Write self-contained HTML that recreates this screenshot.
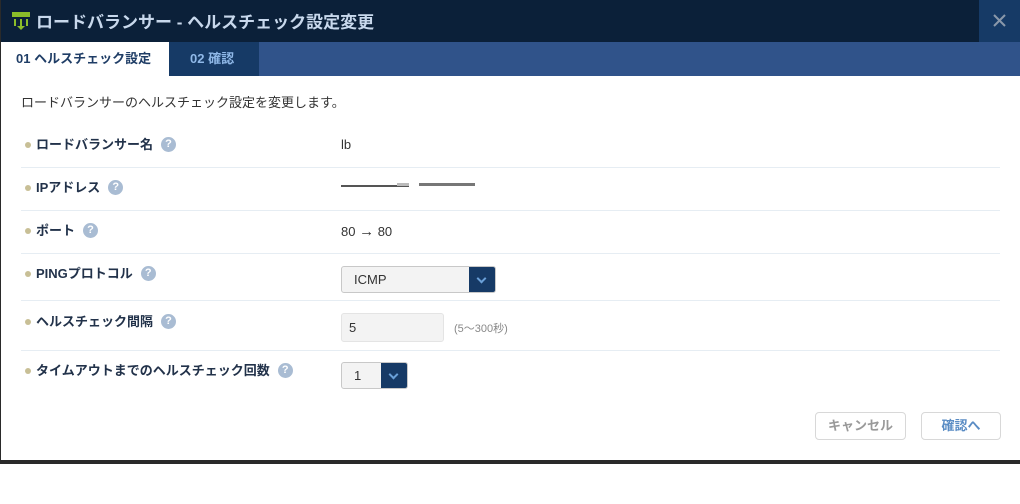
<!DOCTYPE html>
<html><head><meta charset="utf-8"><style>
*{margin:0;padding:0;box-sizing:border-box}
body{width:1020px;height:504px;background:#fff;font-family:"Liberation Sans","Noto Sans CJK JP",sans-serif;position:relative;overflow:hidden;color:#333}
.hdr{position:absolute;left:0;top:0;width:1020px;height:42px;background:#0b2039}
.hdr .t{position:absolute;left:36px;top:8px;font-size:17px;font-weight:bold;color:#c8d8ec}
.close{position:absolute;left:979px;top:0;width:41px;height:42px;background:#163a66}
.tabs{position:absolute;left:0;top:42px;width:1020px;height:34px;background:#30538a}
.tab1{position:absolute;left:0;top:0;width:169px;height:34px;background:#fff;color:#1f3d66;font-weight:bold;font-size:13px;line-height:34px;padding-left:16px}
.tab2{position:absolute;left:169px;top:0;width:90px;height:34px;background:#163a66;color:#8fb8e8;font-weight:bold;font-size:13px;line-height:34px;padding-left:21px}
.desc{position:absolute;left:21px;top:92px;font-size:13px;color:#333}
.row{position:absolute;left:21px;width:979px;border-bottom:1px solid #e6edf3}
.lbl{position:absolute;left:15px;font-size:13px;font-weight:bold;color:#22324a;line-height:16px}
.lbl:before{content:"";position:absolute;left:-11px;top:5px;width:6px;height:6px;border-radius:50%;background:#c8bf96}
.q{display:inline-block;width:15px;height:15px;border-radius:50%;background:#a9bcd3;color:#fff;font-size:11px;text-align:center;line-height:15px;margin-left:8px;vertical-align:top}
.val{position:absolute;left:320px;font-size:13px;color:#333}
.sel{position:absolute;left:341px;height:27px;border:1px solid #c8c8c8;border-radius:3px;background:#f3f3f3;font-size:13px;line-height:25px;padding-left:12px;overflow:hidden}
.sel .ar{position:absolute;right:0;top:0;width:26px;height:27px;background:#163a66}
.sel .ar:after{content:"";position:absolute;left:9px;top:8px;width:5px;height:5px;border-right:2px solid #6aa0d8;border-bottom:2px solid #6aa0d8;transform:rotate(45deg)}
.inp{position:absolute;left:341px;top:313px;width:103px;height:29px;border:1px solid #e4e4e4;border-radius:3px;background:#f3f3f3;font-size:13px;line-height:27px;padding-left:7px}
.btn{position:absolute;top:412px;height:28px;border:1px solid #d8d8d8;border-radius:4px;background:#fff;font-size:13px;font-weight:bold;text-align:center;line-height:26px}
</style></head><body>
<div class="hdr">
<svg style="position:absolute;left:12px;top:11px" width="18" height="20" viewBox="0 0 18 20"><rect x="0" y="1" width="18" height="5" fill="#8bbd2a"/><rect x="2" y="8" width="2" height="7" fill="#8bbd2a"/><rect x="8" y="8" width="2" height="10" fill="#8bbd2a"/><rect x="14" y="8" width="2" height="7" fill="#8bbd2a"/><path d="M5 15l4 4 4-4z" fill="#8bbd2a"/></svg>
<div class="t">ロードバランサー - ヘルスチェック設定変更</div>
<div class="close"><svg style="position:absolute;left:14px;top:14px" width="13" height="13" viewBox="0 0 13 13"><path d="M1 1L12 12M12 1L1 12" stroke="#8a98aa" stroke-width="2"/></svg></div></div>
<div class="tabs"><div class="tab1">01 ヘルスチェック設定</div><div class="tab2">02 確認</div></div>
<div class="desc">ロードバランサーのヘルスチェック設定を変更します。</div>
<div class="row" style="top:124px;height:44px"><div class="lbl" style="top:13px">ロードバランサー名<span class="q">?</span></div><div class="val" style="top:13px">lb</div></div>
<div class="row" style="top:168px;height:43px"><div class="lbl" style="top:12px">IPアドレス<span class="q">?</span></div>
<div style="position:absolute;left:320px;top:17px;width:68px;height:2px;background:#555"></div><div style="position:absolute;left:376px;top:15px;width:12px;height:3px;background:#bbb"></div><div style="position:absolute;left:398px;top:15px;width:56px;height:3px;background:#777"></div></div>
<div class="row" style="top:211px;height:43px"><div class="lbl" style="top:12px">ポート<span class="q">?</span></div><div class="val" style="top:12px">80 <span style="font-size:15px">→</span> 80</div></div>
<div class="row" style="top:254px;height:47px"><div class="lbl" style="top:12px">PINGプロトコル<span class="q">?</span></div></div>
<div class="sel" style="top:266px;width:155px">ICMP<div class="ar"></div></div>
<div class="row" style="top:301px;height:50px"><div class="lbl" style="top:13px">ヘルスチェック間隔<span class="q">?</span></div></div>
<div class="inp">5</div><div style="position:absolute;left:454px;top:320px;font-size:11px;color:#888">(5～300秒)</div>
<div class="lbl" style="top:363px;left:36px">タイムアウトまでのヘルスチェック回数<span class="q">?</span></div>
<div class="sel" style="top:362px;width:67px">1<div class="ar"></div></div>
<div class="btn" style="left:815px;width:91px;color:#999">キャンセル</div>
<div class="btn" style="left:921px;width:80px;color:#5a8cc4">確認へ</div>
<div style="position:absolute;left:0;top:460px;width:1020px;height:4px;background:#2a2a2a"></div>
<div style="position:absolute;left:0;top:0;width:1px;height:464px;background:#2a2a2a"></div>
</body></html>
